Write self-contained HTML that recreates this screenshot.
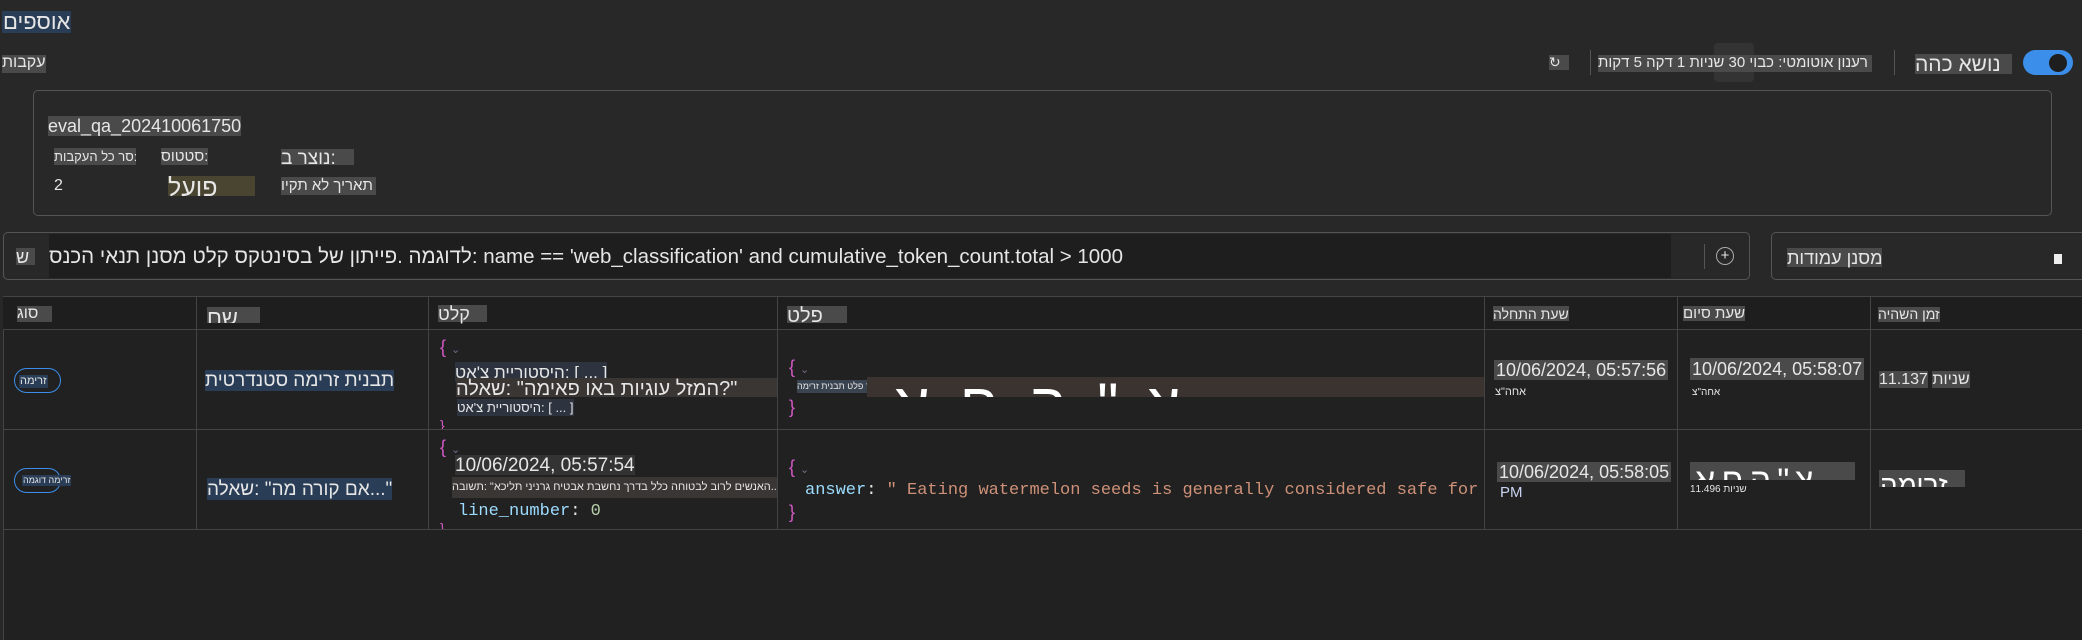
<!DOCTYPE html>
<html><head><meta charset="utf-8"><style>
*{margin:0;padding:0;box-sizing:border-box}
body{width:2082px;height:640px;background:#282828;overflow:hidden;position:relative;font-family:"Liberation Sans","DejaVu Sans",sans-serif;color:#e6e6e6}
.t{position:absolute;white-space:nowrap;line-height:1;direction:ltr;unicode-bidi:bidi-override}
.t span{unicode-bidi:bidi-override;direction:ltr}
.g{background:#4a4a4a}
.b{background:#2a3d56}
.m{font-family:"Liberation Mono","DejaVu Sans Mono",monospace}
.box{position:absolute;border:1px solid #555;border-radius:5px}
.vl{position:absolute;width:1px;background:#444}
.hl{position:absolute;height:1px;background:#444;left:3px;right:0}
.br{color:#d65ac8}
.chev{color:#7a6a8a;font-size:11px}
.clip{position:absolute;overflow:hidden}
</style></head><body>
<div class="t b" style="left:2px;top:11px;font-size:22px;padding:0 1px">םיפסוא</div>
<div class="t g" style="left:2px;top:55px;font-size:16px;height:18px">תובקע</div>

<div style="position:absolute;left:2023px;top:50px;width:50px;height:25px;border-radius:13px;background:#3b8eea"></div>
<div style="position:absolute;left:2049px;top:54px;width:18px;height:18px;border-radius:50%;background:#1e1e1e"></div>
<div class="t g" style="left:1915px;top:54px;font-size:21px;height:20px;width:97px;overflow:hidden">ההכ אשונ</div>
<div class="vl" style="left:1894px;top:50px;height:25px;background:#555"></div>
<div style="position:absolute;left:1714px;top:43px;width:40px;height:39px;border-radius:4px;background:#333"></div>
<div class="t g" style="left:1598px;top:55px;font-size:15px;height:17px;width:274px;overflow:hidden">תוקד 5 הקד 1 תוינש 30 יובכ :יטמוטוא ןונער</div>
<div class="vl" style="left:1590px;top:50px;height:25px;background:#555"></div>
<div class="t g" style="left:1549px;top:55px;font-size:14px;width:20px;height:15px">↻</div>

<div class="box" style="left:33px;top:90px;width:2019px;height:126px"></div>
<div class="t g" style="left:48px;top:116px;font-size:18px;height:20px;padding-top:1px">eval_qa_202410061750</div>
<div class="t g" style="left:54px;top:148px;font-size:13px;height:17px;width:82px;overflow:hidden;padding-top:2px">תובקעה לכ רס:</div>
<div class="t g" style="left:161px;top:148px;font-size:15px;height:17px;padding-top:1px">סוטטס:</div>
<div class="t g" style="left:281px;top:149px;font-size:19px;height:16px;width:73px;overflow:hidden">ב רצונ:</div>
<div class="t" style="left:54px;top:178px;font-size:16px">2</div>
<div class="t" style="left:168px;top:176px;font-size:25px;height:20px;width:87px;overflow:hidden;background:#4a4530">לעופ</div>
<div class="t g" style="left:281px;top:177px;font-size:15px;height:18px;width:95px;overflow:hidden;padding-top:1px">ויקת אל ךיראת</div>

<div class="box" style="left:3px;top:232px;width:1747px;height:48px"></div>
<div style="position:absolute;left:49px;top:234px;width:1622px;height:44px;background:#1e1e1e"></div>
<div class="t g" style="left:16px;top:248px;font-size:18px;width:19px;height:17px">ש</div>
<div class="t" style="left:49px;top:247px;font-size:20.5px">סנכה יאנת ןנסמ טלק סקטניסב לש ןותייפ. המגודל: name == 'web_classification' and cumulative_token_count.total &gt; 1000</div>
<div class="vl" style="left:1704px;top:244px;height:25px;background:#555"></div>
<div class="t" style="left:1716px;top:247px;width:18px;height:18px;border:1px solid #aaa;border-radius:50%;font-size:15px;text-align:center;line-height:16px">+</div>
<div class="box" style="left:1771px;top:232px;width:320px;height:48px"></div>
<div class="t g" style="left:1787px;top:248px;font-size:18px;height:19px;padding-top:1px">תודומע ןנסמ</div>
<div style="position:absolute;left:2054px;top:254px;width:8px;height:10px;background:#eee"></div>

<div style="position:absolute;left:3px;top:296px;right:0;bottom:0;background:#212121;border-left:1px solid #444"></div>
<div style="position:absolute;left:3px;top:296px;right:0;height:33px;background:#1e1e1e"></div>
<div class="hl" style="top:296px"></div>
<div class="hl" style="top:329px"></div>
<div class="hl" style="top:429px"></div>
<div class="hl" style="top:529px"></div>
<div class="vl" style="left:196px;top:296px;height:233px"></div>
<div class="vl" style="left:428px;top:296px;height:233px"></div>
<div class="vl" style="left:777px;top:296px;height:233px"></div>
<div class="vl" style="left:1484px;top:296px;height:233px"></div>
<div class="vl" style="left:1677px;top:296px;height:233px"></div>
<div class="vl" style="left:1870px;top:296px;height:233px"></div>

<div class="t g" style="left:17px;top:306px;font-size:16px;height:16px;width:35px">גוס</div>
<div class="t g" style="left:207px;top:307px;font-size:22px;height:16px;width:53px;overflow:hidden">םש</div>
<div class="t g" style="left:438px;top:305px;font-size:18px;height:17px;width:49px">טלק</div>
<div class="t g" style="left:787px;top:306px;font-size:20px;height:17px;width:60px;overflow:hidden">טלפ</div>
<div class="t g" style="left:1493px;top:306px;font-size:14px;height:15px;padding-top:1px">הלחתה תעש</div>
<div class="t g" style="left:1683px;top:306px;font-size:15px;height:15px">םויס תעש</div>
<div class="t g" style="left:1878px;top:307px;font-size:14px;height:15px">היהשה ןמז</div>

<!-- row 1 -->
<div style="position:absolute;left:14px;top:368px;width:47px;height:25px;border:1.5px solid #3b8eea;border-radius:13px"></div>
<div class="t b" style="left:19px;top:375px;font-size:11px;padding:1px 1px">המירז</div>
<div class="t b" style="left:205px;top:370px;font-size:19px;height:21px;padding-top:1px">תיטרדנטס המירז תינבת</div>
<div class="t br" style="left:440px;top:338px;font-size:18px">{ <span class="chev">⌄</span></div>
<div class="t" style="left:455px;top:362px;font-size:17px;height:20px;background:#2d3440;padding-top:2px">טא'צ תיירוטסיה: [ ... ]</div>
<div class="t" style="left:456px;top:378px;font-size:20px;height:19px;width:321px;background:#3a3634;overflow:hidden;padding-top:1px">הלאש: "המיאפ ואב תויגוע לזמה?"</div>
<div class="t" style="left:457px;top:399px;font-size:13px;height:17px;background:#2d3440;padding-top:2px">טא'צ תיירוטסיה: [ ... ]</div>
<div class="t br" style="left:440px;top:418px;font-size:14px;height:11px;overflow:hidden">}</div>

<div class="t br" style="left:789px;top:358px;font-size:18px">{ <span class="chev">⌄</span></div>
<div class="t" style="left:797px;top:380px;font-size:9px;height:13px;width:70px;background:#3a4450;overflow:hidden;padding-top:2px">המירז תינבת טלפ ךרע</div>
<div class="clip" style="left:867px;top:377px;width:617px;height:20px;background:#3a3330"><div class="t" style="left:25px;top:-2px;font-size:60px;letter-spacing:30px;color:#fff">אחה"צ</div></div>
<div class="t br" style="left:789px;top:398px;font-size:18px">}</div>

<div class="t g" style="left:1494px;top:360px;font-size:18px;height:20px;padding:1px 2px 0">10/06/2024, 05:57:56</div>
<div class="t" style="left:1495px;top:387px;font-size:11px">צ"החא</div>
<div class="t g" style="left:1690px;top:358px;font-size:18px;height:22px;padding:2px 2px 0">10/06/2024, 05:58:07</div>
<div class="t" style="left:1692px;top:388px;font-size:10px">צ"החא</div>
<div class="t" style="left:1879px;top:372px;font-size:16px"><span class="g">11.137</span> <span class="g">תוינש</span></div>

<!-- row 2 -->
<div style="position:absolute;left:14px;top:468px;width:47px;height:25px;border:1.5px solid #3b8eea;border-radius:13px"></div>
<div class="t b" style="left:22px;top:475px;font-size:9px;padding:1px 1px">המגוד המירז</div>
<div class="t b" style="left:207px;top:478px;font-size:19px;height:22px;padding-top:2px">הלאש: "המ הרוק םא..."</div>
<div class="t br" style="left:440px;top:438px;font-size:18px">{ <span class="chev">⌄</span></div>
<div class="t g" style="left:455px;top:455px;font-size:19px;height:20px;padding-top:1px;background:#333">10/06/2024, 05:57:54</div>
<div class="t" style="left:452px;top:477px;font-size:11px;height:21px;width:325px;overflow:hidden;background:#3a3634;padding-top:5px">הבושת: "אכילת ינינרג חיטבא תבשחנ ךרדב ללכ החוטבל בורל םישנאה..."</div>
<div class="t m" style="left:458px;top:503px;font-size:17px"><span style="color:#9cdcfe">line_number</span>: <span style="color:#b5cea8">0</span></div>
<div class="t br" style="left:440px;top:521px;font-size:14px;height:8px;overflow:hidden">}</div>

<div class="t br" style="left:789px;top:458px;font-size:18px">{ <span class="chev">⌄</span></div>
<div class="t m" style="left:805px;top:482px;font-size:17px;width:679px;overflow:hidden"><span style="color:#9cdcfe">answer</span>: <span style="color:#ce9178">" Eating watermelon seeds is generally considered safe for most people</span></div>
<div class="t br" style="left:789px;top:503px;font-size:18px">}</div>

<div class="t g" style="left:1497px;top:462px;font-size:18px;height:20px;padding:1px 2px 0">10/06/2024, 05:58:05</div>
<div class="t" style="left:1500px;top:485px;font-size:15px;color:#c8d4f0">PM</div>
<div class="clip g" style="left:1690px;top:462px;width:165px;height:18px"><div class="t" style="left:4px;top:2px;font-size:34px;letter-spacing:6px;color:#fff">אחה"צ</div></div>
<div class="t" style="left:1690px;top:485px;font-size:10px">11.496 תוינש</div>
<div class="clip g" style="left:1879px;top:470px;width:86px;height:17px"><div class="t" style="left:1px;top:2px;font-size:28px;color:#fff">המירז</div></div>
</body></html>
